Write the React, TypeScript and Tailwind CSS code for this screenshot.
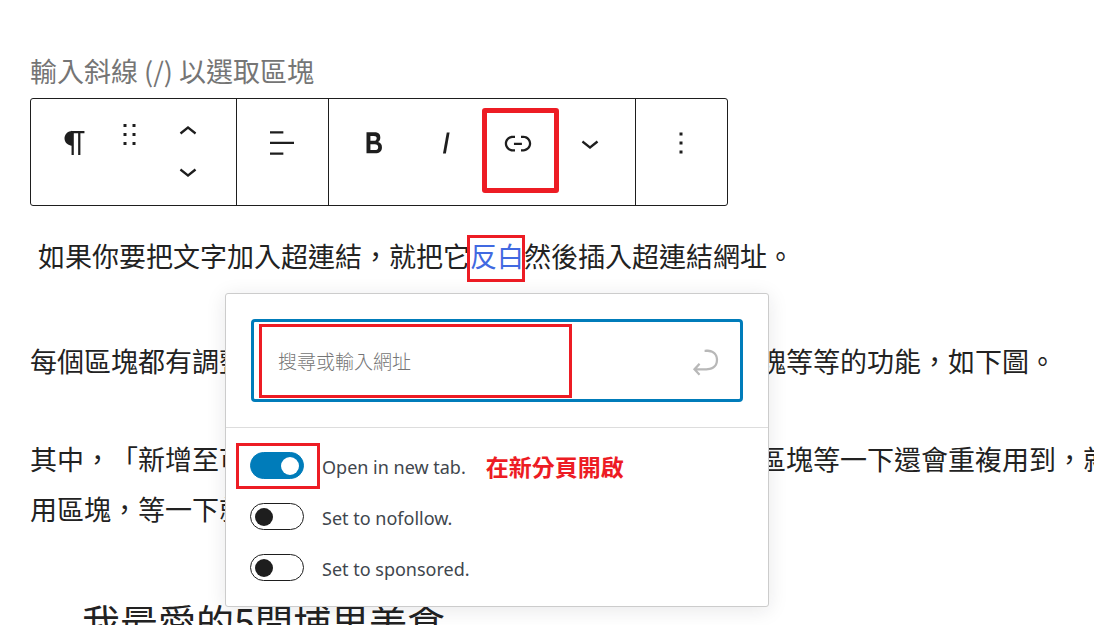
import type { ReactNode } from "react";

const Icon = ({ d, viewBox = "0 0 24 24" }: { d: string; viewBox?: string }) => (
  <svg className="size-9 shrink-0 fill-current" viewBox={viewBox} aria-hidden="true">
    <path d={d} />
  </svg>
);

const icons = {
  paragraph:
    "M18.3 4H9.9v-.1l-.9.2c-2.3.4-4 2.4-4 4.8s1.7 4.4 4 4.8l.7.1V20h1.5V5.5h2.9V20h1.5V5.5h2.7V4z",
  drag: "M5 4h2V2H5v2zm6-2v2h2V2h-2zm-6 8h2V8H5v2zm6 0h2V8h-2v2zm-6 6h2v-2H5v2zm6 0h2v-2h-2v2z",
  up: "M6.5 12.4L12 8l5.5 4.4-.9 1.2L12 10l-4.5 3.6-1-1.2z",
  down: "M17.5 11.6L12 16l-5.5-4.4.9-1.2L12 14l4.5-3.6 1 1.2z",
  align: "M4 19.8h8.9v-1.5H4v1.5zm8.9-15.6H4v1.5h8.9V4.2zm-8.9 7v1.5h16v-1.5H4z",
  bold: "M14.7 11.3c1-.6 1.5-1.6 1.5-3 0-2.3-1.3-3.4-4-3.4H7v14h5.8c1.4 0 2.5-.3 3.3-1 .8-.7 1.2-1.7 1.2-2.9.1-1.9-.8-3.1-2.6-3.7zm-5.1-4h2.3c.6 0 1.1.1 1.4.4.3.3.5.7.5 1.2s-.2 1-.5 1.2c-.3.3-.8.4-1.4.4H9.6V7.3zm4.6 9c-.4.3-1 .4-1.7.4H9.6v-3.9h2.9c.7 0 1.3.2 1.7.5.4.3.6.8.6 1.5s-.2 1.2-.6 1.5z",
  italic: "M12.5 5L10 19h1.9l2.5-14z",
  link: "M15.6 7.2H14v1.5h1.6c2 0 3.7 1.7 3.7 3.7s-1.7 3.7-3.7 3.7H14v1.5h1.6c2.8 0 5.2-2.3 5.2-5.2 0-2.9-2.3-5.2-5.2-5.2zM4.7 12.4c0-2 1.7-3.7 3.7-3.7H10V7.2H8.4c-2.9 0-5.2 2.3-5.2 5.2 0 2.9 2.3 5.2 5.2 5.2H10v-1.5H8.4c-2 0-3.7-1.7-3.7-3.7zm4.6.9h5.3v-1.5H9.3v1.5z",
  more: "M13 19h-2v-2h2v2zm0-6h-2v-2h2v2zm0-6h-2V5h2v2z",
  enter:
    "M6.734 16.106l2.176-2.38-1.093-1.028-3.846 4.158 3.846 4.157 1.093-1.027-2.176-2.38h2.811c1.125 0 2.25.03 3.374 0 1.428-.001 3.362-.25 4.963-1.277 1.66-1.065 2.868-2.906 2.868-5.859 0-2.479-1.327-4.896-3.65-5.93-1.82-.813-3.044-.8-4.806-.788l-.567.002v1.5c.184 0 .368 0 .553-.002 1.82-.007 2.704-.014 4.21.657 1.854.827 2.76 2.657 2.76 4.561 0 2.472-.973 3.824-2.178 4.596-1.258.807-2.864 1.04-4.163 1.04h-.02c-1.115.03-2.229 0-3.344 0H6.734z",
};

const ToolButton = ({ label, d, children }: { label: string; d: string; children?: ReactNode }) => (
  <button aria-label={label} className="relative flex h-22 w-18 items-center justify-center">
    <Icon d={d} />
    {children}
  </button>
);

const Toolbar = () => (
  <div
    role="toolbar"
    className="flex h-[108px] w-fit divide-x divide-[#1e1e1e] rounded-[3px] border border-[#1e1e1e] bg-white text-[#1e1e1e]"
  >
    <div className="flex px-2">
      <ToolButton label="段落" d={icons.paragraph} />
      <button aria-label="拖曳" className="flex h-[70px] w-9 items-center justify-center">
        <svg className="size-[27px] fill-current" viewBox="0 0 18 18" aria-hidden="true">
          <path d={icons.drag} />
        </svg>
      </button>
      <div className="flex w-[81px] flex-col items-center gap-[3px] pt-[15px]">
        <button aria-label="上移">
          <Icon d={icons.up} />
        </button>
        <button aria-label="下移">
          <Icon d={icons.down} />
        </button>
      </div>
    </div>
    <div className="flex pr-[10px] pl-[9px]">
      <ToolButton label="對齊" d={icons.align} />
    </div>
    <div className="flex px-[9px]">
      <ToolButton label="粗體" d={icons.bold} />
      <ToolButton label="斜體" d={icons.italic} />
      <ToolButton label="連結" d={icons.link}>
        <span className="absolute top-[9px] -right-[5px] -bottom-[6px] left-0 rounded-[3px] border-5 border-[#ed1c24]" />
      </ToolButton>
      <ToolButton label="更多格式" d={icons.down} />
    </div>
    <div className="flex pr-[10px] pl-[9px]">
      <ToolButton label="選項" d={icons.more} />
    </div>
  </div>
);

const Toggle = ({ label, on = false }: { label: string; on?: boolean }) => (
  <label className="flex items-center gap-[18px]">
    <span className="relative flex">
      <input
        type="checkbox"
        role="switch"
        defaultChecked={on}
        className="flex h-[27px] w-[54px] appearance-none items-center rounded-full border border-[#1e1e1e] bg-white px-1 before:size-[18px] before:rounded-full before:bg-[#1e1e1e] checked:justify-end checked:border-[#007cba] checked:bg-[#007cba] checked:before:bg-white"
      />
      {on && (
        <span className="absolute -top-[9px] -right-4 -bottom-[10px] -left-[14px] border-3 border-[#ed1c24]" />
      )}
    </span>
    <span className="pt-[3px]">{label}</span>
  </label>
);

const LinkPopover = () => (
  <div className="absolute top-[293px] left-[225px] w-[544px] rounded-[3px] border border-[#ccc] bg-white shadow-[0_3px_20px_rgba(25,30,35,0.1)]">
    {/* URL field */}
    <div className="border-b border-[#ddd] px-[25px] py-[25px]">
      <div className="relative flex h-[83px] items-center rounded-[4px] border-3 border-[#007cba] pr-5">
        <input
          type="text"
          aria-label="網址"
          placeholder="搜尋或輸入網址"
          className="h-full min-w-0 flex-1 px-6 text-[19px] font-light outline-none placeholder:text-[#757575]"
        />
        <button aria-label="送出" className="pb-1 text-[#b8b8b8]">
          <Icon d={icons.enter} viewBox="-2 -2 24 24" />
        </button>
        <span className="pointer-events-none absolute top-[2px] bottom-px left-[5px] w-[313px] border-3 border-[#ed1c24]" />
      </div>
    </div>

    {/* Link settings */}
    <div className="flex flex-col gap-6 px-6 pt-6 pb-[25px] font-['Noto_Sans','Noto_Sans_CJK_TC',sans-serif] text-[18px] leading-6 text-[#40464d]">
      <div className="flex items-center gap-5">
        <Toggle label="Open in new tab." on />
        <strong className="pt-[3px] text-[23px] font-bold text-[#ed1c24]">在新分頁開啟</strong>
      </div>
      <Toggle label="Set to nofollow." />
      <Toggle label="Set to sponsored." />
    </div>
  </div>
);

const App = () => {
  return (
    <div className="relative h-screen overflow-hidden bg-white pt-[46px] pl-[30px] font-['Noto_Sans_CJK_TC',sans-serif] text-[27px] leading-[50px] whitespace-nowrap text-[#222] [text-spacing-trim:space-all]">
      <p className="text-[#757575]">輸入斜線 (/) 以選取區塊</p>
      <div className="pt-[2px]">
        <Toolbar />
      </div>

      <p className="pt-[25px] pl-2">
        如果你要把文字加入超連結，就把它
        <a href="#" className="relative text-[#4169e1]">
          反白
          <span className="absolute -top-px -right-px -bottom-[7px] -left-[3px] border-3 border-[#ed1c24]" />
        </a>
        然後插入超連結網址。
      </p>
      <p className="pt-[55px]">
        每個區塊都有調整、移動、複製、刪除，以及新增至可重用區塊等等的功能，如下圖。
      </p>
      <p className="pt-12">
        其中，「新增至可重用區塊」的功能是指，如果你覺得這一個區塊等一下還會重複用到，就
        <br />
        用區塊，等一下就可以直接使用。
      </p>
      <h2 className="pt-[62px] pl-[52px] text-[38px]">我最愛的5間埔里美食</h2>

      <LinkPopover />
    </div>
  );
};

export default App;
